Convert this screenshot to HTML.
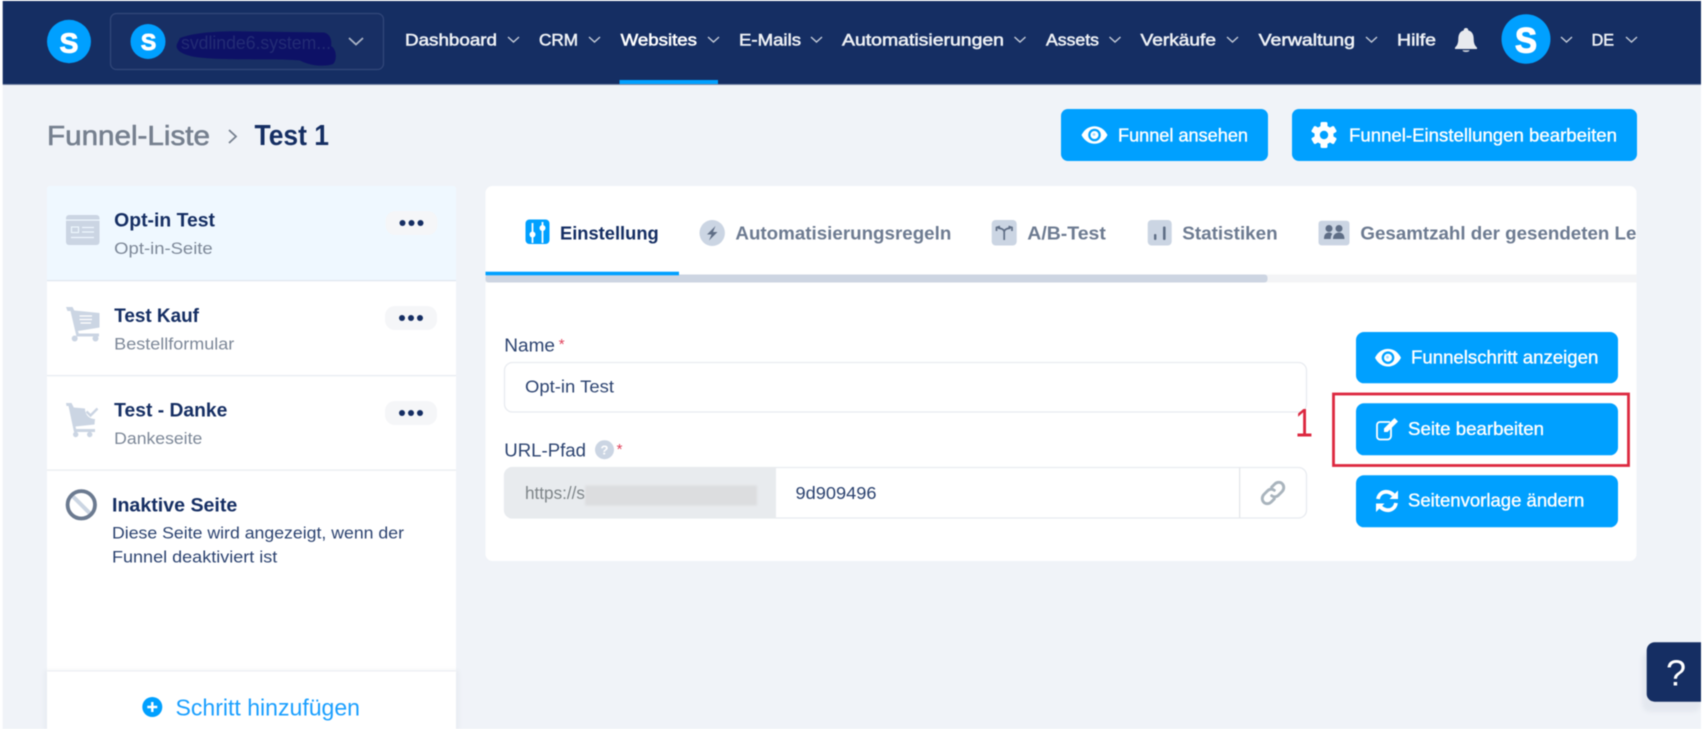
<!DOCTYPE html>
<html><head><meta charset="utf-8"><title>Funnel</title>
<style>
html,body{margin:0;padding:0;background:#fff;width:1703px;height:729px;overflow:hidden}
svg{display:block;filter:blur(.4px)}
text{font-family:"Liberation Sans",sans-serif}
.nav{font-size:17px;fill:#eef1f5;stroke:#eef1f5;stroke-width:.55}
.ch{fill:none;stroke:#c3cad7;stroke-width:1.4}
.t{font-size:19px;font-weight:700;fill:#152e63}
.s{font-size:17px;fill:#7d8898}
.tab{font-size:18.5px;font-weight:700;fill:#6d7b91}
.btn{font-size:18px;fill:#fff;stroke:#fff;stroke-width:.35}
.lab{font-size:18px;fill:#2c4370}
.ic{fill:#cbd5e3}
</style></head><body>
<svg width="1703" height="729" viewBox="0 0 1703 729" xmlns="http://www.w3.org/2000/svg">
<defs>
<g id="eye"><path d="M-13 0C-10-6-5-8.8 0-8.800S10-6 13 0C10 6 5 8.800 0 8.800S-10 6-13 0Z" fill="#fff"/><circle r="6.300" fill="#00a0ff"/><circle r="4" fill="#fff"/><circle cx="-.5" cy="-.5" r="1.400" fill="#9dd8ff"/></g>
<g id="dots"><rect x="0" y="0" width="52" height="24" rx="10" fill="#f5f6f8"/><circle cx="17" cy="12" r="3" fill="#152e63"/><circle cx="26" cy="12" r="3" fill="#152e63"/><circle cx="35" cy="12" r="3" fill="#152e63"/></g>
<filter id="bl"><feGaussianBlur stdDeviation="2"/></filter>
<filter id="bl2" x="-5%" y="-20%" width="110%" height="140%"><feGaussianBlur stdDeviation="1.300"/></filter>
</defs>

<rect x="0" y="0" width="1703" height="729" fill="#fff"/>
<rect x="2.700" y="1" width="1698.300" height="728" fill="#f0f3f8"/>

<!-- header -->
<rect x="2.700" y="1" width="1698.300" height="83" fill="#152e63"/>
<rect x="2.700" y="84" width="1698.300" height="1" fill="#7c8aa8"/>
<rect x="619.500" y="80" width="98.500" height="4" fill="#00a0ff"/>

<ellipse cx="69" cy="41.500" rx="22" ry="21.700" fill="#00a0ff"/>
<text x="69" y="52.500" text-anchor="middle" font-size="28" font-weight="700" fill="#fff" stroke="#fff" stroke-width="1">S</text>

<rect x="110.500" y="13.500" width="273" height="56" rx="6" fill="#182f64" stroke="#33487a" stroke-width="1.200"/>
<ellipse cx="148" cy="41.500" rx="17.500" ry="17.500" fill="#00a0ff"/>
<text x="148.500" y="50" text-anchor="middle" font-size="23" font-weight="700" fill="#fff" stroke="#fff" stroke-width=".9">S</text>
<path d="M180 38C195 32 225 30.500 250 31.500L324 32.500C331 34 332 42 331 46C337 49 337 61 333 64C325 67 310 66 300 60.500C280 58.500 230 60.500 205 58C188 57 174 52 177 44Z" fill="#0d1166"/>
<text x="181" y="49" font-size="18" fill="#232c74" textLength="150" lengthAdjust="spacingAndGlyphs">svdlinde6.system...</text>
<path class="ch" style="stroke-width:1.800;stroke:#aab3c4" d="M349 38l7 6.500 7-6.500"/>

<text class="nav" x="405" y="45.500" textLength="92" lengthAdjust="spacingAndGlyphs">Dashboard</text>
<path class="ch" d="M508 37l5.500 5 5.500-5"/>
<text class="nav" x="539" y="45.500" textLength="39" lengthAdjust="spacingAndGlyphs">CRM</text>
<path class="ch" d="M589 37l5.500 5 5.500-5"/>
<text class="nav" x="620.600" y="45.500" textLength="76.400" lengthAdjust="spacingAndGlyphs" style="fill:#fff;stroke:#fff">Websites</text>
<path class="ch" d="M708 37l5.500 5 5.500-5"/>
<text class="nav" x="739" y="45.500" textLength="62" lengthAdjust="spacingAndGlyphs">E-Mails</text>
<path class="ch" d="M811 37l5.500 5 5.500-5"/>
<text class="nav" x="842" y="45.500" textLength="162" lengthAdjust="spacingAndGlyphs">Automatisierungen</text>
<path class="ch" d="M1014.500 37l5.500 5 5.500-5"/>
<text class="nav" x="1046" y="45.500" textLength="53" lengthAdjust="spacingAndGlyphs">Assets</text>
<path class="ch" d="M1109.500 37l5.500 5 5.500-5"/>
<text class="nav" x="1140.500" y="45.500" textLength="75.500" lengthAdjust="spacingAndGlyphs">Verkäufe</text>
<path class="ch" d="M1227 37l5.500 5 5.500-5"/>
<text class="nav" x="1258.600" y="45.500" textLength="96.400" lengthAdjust="spacingAndGlyphs">Verwaltung</text>
<path class="ch" d="M1366 37l5.500 5 5.500-5"/>
<text class="nav" x="1397" y="45.500" textLength="39" lengthAdjust="spacingAndGlyphs">Hilfe</text>
<!-- bell -->
<path d="M1466 28c1.500 0 2.300 1 2.300 2.400 3.800 1 5.400 4.400 5.400 8.600 0 4 1 6.500 3.300 8.500v1.500h-22v-1.500c2.300-2 3.300-4.500 3.300-8.500 0-4.200 1.600-7.600 5.400-8.600 0-1.400.8-2.400 2.300-2.400z" fill="#e8eaee"/>
<path d="M1462.500 50.200h7c0 1-1.500 1.800-3.500 1.800s-3.500-.8-3.500-1.800z" fill="#cfd3da"/>
<ellipse cx="1526" cy="39" rx="24.500" ry="24.800" fill="#00a0ff"/>
<text x="1515" y="52.500" font-size="35" font-weight="700" fill="#fff" stroke="#fff" stroke-width="1.200" textLength="22" lengthAdjust="spacingAndGlyphs">S</text>
<path class="ch" d="M1561 37l5.500 5 5.500-5"/>
<text class="nav" x="1591.600" y="45.500" textLength="22.400" lengthAdjust="spacingAndGlyphs">DE</text>
<path class="ch" d="M1626 37l5.500 5 5.500-5"/>

<!-- breadcrumb -->
<text x="47" y="145" font-size="28" fill="#76808f" stroke="#76808f" stroke-width=".6" textLength="163" lengthAdjust="spacingAndGlyphs">Funnel-Liste</text>
<path d="M229 130l7 6.500-7 6.500" fill="none" stroke="#76808f" stroke-width="1.800"/>
<text x="254.500" y="145" font-size="28.500" font-weight="700" fill="#152e63" textLength="74.500" lengthAdjust="spacingAndGlyphs">Test 1</text>

<!-- top buttons -->
<rect x="1061" y="109" width="207" height="52" rx="7" fill="#00a0ff"/>
<use href="#eye" transform="translate(1094.500,135)"/>
<text class="btn" x="1118" y="141.500" textLength="130" lengthAdjust="spacingAndGlyphs">Funnel ansehen</text>
<rect x="1292" y="109" width="345" height="52" rx="7" fill="#00a0ff"/>
<g transform="translate(1324,135)" fill="#fff">
<circle r="9.500"/>
<rect x="-3.500" y="-13" width="7" height="26" rx="1.500"/>
<rect x="-3.500" y="-13" width="7" height="26" rx="1.500" transform="rotate(60)"/>
<rect x="-3.500" y="-13" width="7" height="26" rx="1.500" transform="rotate(120)"/>
<circle r="4.200" fill="#00a0ff"/>
</g>
<text class="btn" x="1349" y="141.500" textLength="268" lengthAdjust="spacingAndGlyphs">Funnel-Einstellungen bearbeiten</text>

<!-- left panel -->
<rect x="47" y="186" width="409" height="543" rx="3" fill="#fff"/>
<path d="M47 280V189a3 3 0 0 1 3-3H453a3 3 0 0 1 3 3V280Z" fill="#eff8ff"/>
<rect x="47" y="280" width="409" height="1.200" fill="#dfe6ef"/>
<rect x="47" y="375" width="409" height="1.200" fill="#e6eaf0"/>
<rect x="47" y="469.500" width="409" height="1.200" fill="#e9ecf0"/>

<!-- item1 -->
<rect x="66" y="215" width="33.500" height="30" rx="3" class="ic"/>
<rect x="66" y="219.500" width="33.500" height="1.200" fill="#eff8ff"/>
<rect x="71.500" y="227" width="7" height="5.500" fill="none" stroke="#eff8ff" stroke-width="1.100"/>
<path d="M82 227.500H94M82 232H94M71 237.500H94" stroke="#eff8ff" stroke-width="1.200"/>
<text class="t" x="114.200" y="226.500" textLength="100.800" lengthAdjust="spacingAndGlyphs">Opt-in Test</text>
<text class="s" x="114.200" y="254" textLength="98.500" lengthAdjust="spacingAndGlyphs">Opt-in-Seite</text>
<use href="#dots" transform="translate(385.500,211)"/>

<!-- item2 -->
<path d="M66 307h6.500l1.800 3.500L99.500 313v14.500l-21.500 3.500 .8 2.500H99v3H76.500L70.500 311H67.500z" class="ic"/>
<path d="M79.500 316H92M79.500 319.500H92M80.500 323H91" stroke="#fff" stroke-width="1.300"/>
<circle cx="74.700" cy="338.500" r="3" class="ic"/><circle cx="95.500" cy="338.500" r="3" class="ic"/>
<text class="t" x="114.200" y="322" textLength="84.800" lengthAdjust="spacingAndGlyphs">Test Kauf</text>
<text class="s" x="114.200" y="349.300" textLength="120.100" lengthAdjust="spacingAndGlyphs">Bestellformular</text>
<use href="#dots" transform="translate(385,306)"/>

<!-- item3 -->
<path d="M66 403h5.500l2.300 4.500L85 408.500c0 6 4 10.500 10 10.500l-.5 5.500-19 2 .6 2.500H95v3H74L68.500 406H66.500z" class="ic"/>
<path d="M86.500 411.500l4 4 7-7" fill="none" stroke="#cbd5e3" stroke-width="2.400"/>
<circle cx="75.700" cy="434.500" r="2.700" class="ic"/><circle cx="89.700" cy="434.500" r="2.700" class="ic"/>
<text class="t" x="114.200" y="416.500" textLength="113.100" lengthAdjust="spacingAndGlyphs">Test - Danke</text>
<text class="s" x="114.200" y="444" textLength="88.100" lengthAdjust="spacingAndGlyphs">Dankeseite</text>
<use href="#dots" transform="translate(385,401)"/>

<!-- inactive -->
<path d="M71 494.500L91.500 515" stroke="#cbd5e3" stroke-width="4"/>
<circle cx="81.300" cy="504.800" r="13.700" fill="none" stroke="#6b7a90" stroke-width="3.800"/>
<text class="t" x="112" y="511.700" textLength="125.300" lengthAdjust="spacingAndGlyphs">Inaktive Seite</text>
<text x="112" y="538.300" font-size="17" fill="#2c4370" textLength="292" lengthAdjust="spacingAndGlyphs">Diese Seite wird angezeigt, wenn der</text>
<text x="112" y="562.300" font-size="17" fill="#2c4370" textLength="165.300" lengthAdjust="spacingAndGlyphs">Funnel deaktiviert ist</text>

<!-- footer -->
<rect x="44" y="670.500" width="415" height="60" fill="#e3e7ee" opacity=".6" filter="url(#bl)"/>
<rect x="47" y="670.500" width="409" height="59" fill="#fff"/>
<rect x="47" y="670.500" width="409" height="1" fill="#eceef2"/>
<circle cx="152.300" cy="707" r="10" fill="#00a0ff"/>
<path d="M147.300 707H157.300M152.300 702V712" stroke="#fff" stroke-width="2.400"/>
<text x="175.500" y="715.700" font-size="23" fill="#1a9fff" textLength="184.500" lengthAdjust="spacingAndGlyphs">Schritt hinzufügen</text>

<!-- main card -->
<rect x="485.500" y="186" width="1151" height="375" rx="7" fill="#fff"/>

<!-- tabs -->
<rect x="485.500" y="274.500" width="1151" height="8" fill="#f3f4f6"/>
<rect x="485.500" y="274.500" width="782" height="8" rx="3" fill="#cdd5e2"/>
<rect x="485.500" y="271.700" width="193.500" height="3.600" fill="#00a0ff"/>

<rect x="525.500" y="219.500" width="24" height="24.500" rx="4" fill="#00a0ff"/>
<path d="M532.500 223V243M542.500 222V243" stroke="#fff" stroke-width="1.800"/>
<circle cx="532.500" cy="234.500" r="3" fill="#fff"/><circle cx="542.500" cy="228" r="3" fill="#fff"/>
<text x="560" y="239.300" font-size="18.500" font-weight="700" fill="#152e63" textLength="98.700" lengthAdjust="spacingAndGlyphs">Einstellung</text>

<ellipse cx="712.200" cy="233" rx="12.700" ry="13" fill="#cbd5e3"/>
<path d="M715.500 226L707 234.500h4.500L709 240.500 717.500 232H713Z" fill="#5f6e86"/>
<text class="tab" x="735.400" y="239.700" textLength="215.900" lengthAdjust="spacingAndGlyphs">Automatisierungsregeln</text>

<rect x="991.700" y="220" width="25" height="25.500" rx="4" fill="#cbd5e3"/>
<path d="M1004.200 240V232M1004.200 232C1004.200 229 1001 228.500 998 228M1004.200 232C1004.200 229 1007.500 228.500 1010.500 228M996.500 231L996.500 227.500 1000 226.500M1012 231L1012 227.500 1008.500 226.500" fill="none" stroke="#5f6e86" stroke-width="1.700"/>
<text class="tab" x="1027.300" y="239.700" textLength="78.500" lengthAdjust="spacingAndGlyphs">A/B-Test</text>

<rect x="1147.700" y="220" width="24" height="25.500" rx="4" fill="#cbd5e3"/>
<rect x="1154" y="234" width="2.400" height="6" rx="1" fill="#5f6e86"/>
<rect x="1163" y="226.500" width="2.600" height="13.500" rx="1" fill="#5f6e86"/>
<text class="tab" x="1182.300" y="239.700" textLength="95.400" lengthAdjust="spacingAndGlyphs">Statistiken</text>

<rect x="1318.500" y="220.700" width="31" height="24.700" rx="3" fill="#cbd5e3"/>
<circle cx="1329" cy="228.500" r="3.500" fill="#5f6e86"/><circle cx="1339" cy="228.500" r="3.500" fill="#5f6e86"/>
<path d="M1324 239c0-4 1.500-6.500 5-6.500 1.500 0 2.500.5 3.200 1.500-1 1.300-1.500 3-1.500 5zM1333 239c0-4 2.500-6.500 6-6.500s5.500 2.500 5.500 6.500z" fill="#5f6e86"/>
<text class="tab" x="1360.400" y="239.700" textLength="276" lengthAdjust="spacingAndGlyphs">Gesamtzahl der gesendeten Le</text>

<!-- form -->
<text class="lab" x="504.300" y="351.700" textLength="50.700" lengthAdjust="spacingAndGlyphs">Name</text>
<text x="558.700" y="349" font-size="15" fill="#e0405a">*</text>
<rect x="504.500" y="362.500" width="802" height="49.500" rx="8" fill="#fff" stroke="#e8ebf0" stroke-width="1.300"/>
<text x="525" y="392.700" font-size="17.500" fill="#2c4370" textLength="89" lengthAdjust="spacingAndGlyphs">Opt-in Test</text>

<text class="lab" x="504.300" y="456.700" textLength="81.700" lengthAdjust="spacingAndGlyphs">URL-Pfad</text>
<circle cx="604.500" cy="449.700" r="9.500" fill="#cbd5e3"/>
<text x="604.500" y="454.500" text-anchor="middle" font-size="13" font-weight="700" fill="#fff">?</text>
<text x="616.600" y="454" font-size="15" fill="#e0405a">*</text>

<rect x="504.500" y="467.500" width="802" height="50.500" rx="8" fill="#fff" stroke="#e8ebf0" stroke-width="1.300"/>
<path d="M776 467V518.500H512.500a8 8 0 0 1-8-8V475a8 8 0 0 1 8-8Z" fill="#e8ebee"/>
<text x="525" y="499" font-size="17.500" fill="#7d8488" textLength="60" lengthAdjust="spacingAndGlyphs">https://s</text>
<rect x="585" y="485.500" width="172" height="20" fill="#dcdddf" filter="url(#bl2)"/>
<text x="795.500" y="499" font-size="17.500" fill="#2c4370" textLength="81" lengthAdjust="spacingAndGlyphs">9d909496</text>
<rect x="1239" y="467.500" width="1.300" height="50.500" fill="#e4e7eb"/>
<g fill="none" stroke="#a9b4bd" stroke-width="3.200" stroke-linecap="round" transform="translate(1273 493) scale(.9) translate(-1273 -493)">
<path d="M1271.500 486.500L1275 483c2.500-2.500 6.500-2.500 8.500 0 2 2.200 2 6-.5 8.500l-4 4c-2.200 2.200-5.500 2.200-7.500.5"/>
<path d="M1274.500 499.500L1271 503c-2.500 2.500-6.500 2.500-8.500 0-2-2.200-2-6 .5-8.500l4-4c2.200-2.200 5.500-2.200 7.500-.5"/>
</g>

<!-- side buttons -->
<rect x="1356" y="332" width="262" height="51.300" rx="8" fill="#00a0ff"/>
<use href="#eye" transform="translate(1388,357.700)"/>
<text class="btn" x="1411" y="363.300" textLength="187.300" lengthAdjust="spacingAndGlyphs">Funnelschritt anzeigen</text>

<rect x="1333.500" y="394" width="295" height="71.500" fill="none" stroke="#dc2840" stroke-width="2.800"/>
<rect x="1356" y="403.300" width="262" height="52" rx="8" fill="#00a0ff"/>
<path d="M1391 426.500V436a3.500 3.500 0 0 1-3.500 3.500H1380a3 3 0 0 1-3-3V425a3 3 0 0 1 3-3h10" fill="none" stroke="#fff" stroke-width="1.800"/>
<path d="M1384 428.500L1394.500 418l3.500 3.500L1387.500 432H1384Z" fill="#fff"/>
<text class="btn" x="1408" y="435" textLength="136" lengthAdjust="spacingAndGlyphs">Seite bearbeiten</text>

<rect x="1356" y="475.300" width="262" height="52" rx="8" fill="#00a0ff"/>
<g fill="none" stroke="#fff" stroke-width="3.800">
<path d="M1378 499c.8-5 5-8 10-7 2.500.5 4 1.500 5.500 3"/>
<path d="M1396 503c-.8 5-5 8-10 7-2.500-.5-4-1.500-5.500-3"/>
</g>
<path d="M1398 490.500V499h-8.500zM1376 512v-8.500h8.500z" fill="#fff"/>
<text class="btn" x="1408" y="506.700" textLength="176.300" lengthAdjust="spacingAndGlyphs">Seitenvorlage ändern</text>

<text x="1295" y="436.700" font-size="40" fill="#dc2840" textLength="18" lengthAdjust="spacingAndGlyphs">1</text>

<!-- help -->
<rect x="1642" y="652" width="59" height="60" rx="8" fill="#c6cdd9" opacity=".28" filter="url(#bl)"/>
<path d="M1701 642.300H1654.700a8 8 0 0 0-8 8V693.700a8 8 0 0 0 8 8H1701Z" fill="#152e63"/>
<text x="1676" y="685.500" text-anchor="middle" font-size="36" fill="#fff">?</text>
<rect x="1701" y="630" width="2" height="99" fill="#fff"/>
</svg>
</body></html>
